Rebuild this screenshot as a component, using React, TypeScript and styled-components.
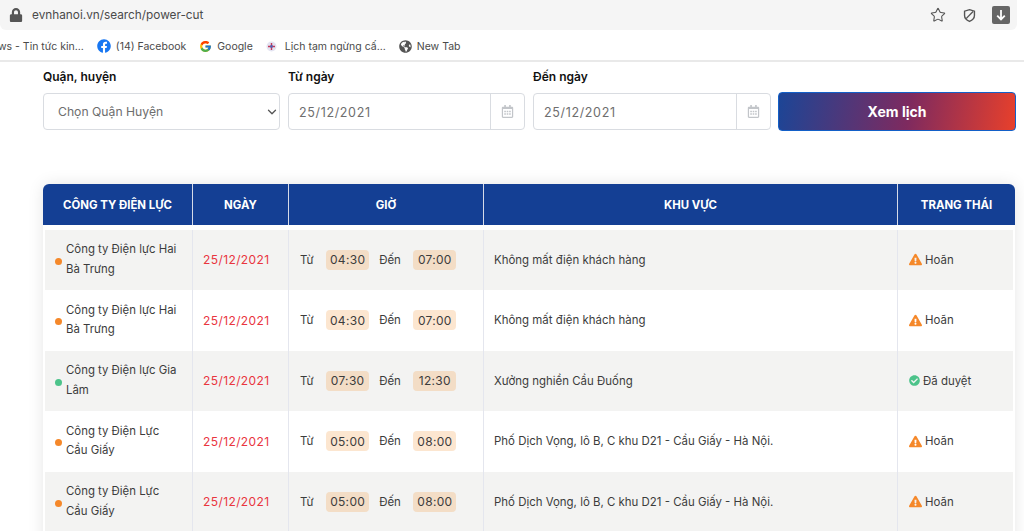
import React from "react";
import styled, { createGlobalStyle } from "styled-components";
import { ChevronDown, Star } from "lucide-react";
import { FaCheckCircle, FaExclamationTriangle, FaFacebook, FaGlobeAmericas, FaLock, FaRegCalendarAlt } from "react-icons/fa";
import { FcGoogle } from "react-icons/fc";

type Row = {
  company: string[];
  from: string;
  to: string;
  area: string;
  done?: boolean;
};

const rows: Row[] = [
  { company: ["Công ty Điện lực Hai", "Bà Trưng"], from: "04:30", to: "07:00", area: "Không mất điện khách hàng" },
  { company: ["Công ty Điện lực Hai", "Bà Trưng"], from: "04:30", to: "07:00", area: "Không mất điện khách hàng" },
  { company: ["Công ty Điện lực Gia", "Lâm"], from: "07:30", to: "12:30", area: "Xưởng nghiền Cầu Đuống", done: true },
  { company: ["Công ty Điện Lực", "Cầu Giấy"], from: "05:00", to: "08:00", area: "Phố Dịch Vọng, lô B, C khu D21 - Cầu Giấy - Hà Nội." },
  { company: ["Công ty Điện Lực", "Cầu Giấy"], from: "05:00", to: "08:00", area: "Phố Dịch Vọng, lô B, C khu D21 - Cầu Giấy - Hà Nội." },
];

export default function App() {
  return (
    <Page>
      <GlobalStyle />
      <UrlBar>
        <UrlLeft>
          <FaLock size={14} color="#555" />
          <UrlText>evnhanoi.vn/search/power-cut</UrlText>
        </UrlLeft>
        <UrlTools>
          <StarIcon size={16} color="#555" strokeWidth={1.6} />
          <svg width="13" height="15" viewBox="0 0 15 16" fill="none" stroke="#555" strokeWidth="1.6">
            <path d="M7.5 1.2 13.2 3v5c0 3.2-2.4 5.4-5.7 6.8C4.2 13.4 1.8 11.2 1.8 8V3z" />
            <path d="M3.6 11.6 11.6 3.4" />
          </svg>
          <DownloadBox>
            <svg width="12" height="12" viewBox="0 0 12 12" fill="none" stroke="#fff" strokeWidth="1.8">
              <path d="M6 1v9.4M2.2 6.6 6 10.4l3.8-3.8" />
            </svg>
          </DownloadBox>
        </UrlTools>
      </UrlBar>
      <Bookmarks>
        <Bookmark>ws - Tin tức kin...</Bookmark>
        <Bookmark>
          <FaFacebook size={14} color="#1877f2" />
          (14) Facebook
        </Bookmark>
        <Bookmark>
          <FcGoogle size={13} />
          Google
        </Bookmark>
        <Bookmark $gap={8}>
          <svg width="11" height="11" viewBox="0 0 11 11">
            <circle cx="5.5" cy="5.5" r="5" fill="#e4e4f2" />
            <path d="M5.5 2v7M2 5.5h7" stroke="#c0395a" strokeWidth="1.4" />
            <circle cx="5.5" cy="5.5" r="1.4" fill="#5560b0" />
          </svg>
          Lịch tạm ngừng cấ...
        </Bookmark>
        <Bookmark>
          <FaGlobeAmericas size={13} color="#555" />
          New Tab
        </Bookmark>
      </Bookmarks>

      <Filters>
        <Field>
          <Label>Quận, huyện</Label>
          <SelectBox>
            <Select defaultValue="">
              <option value="">Chọn Quận Huyện</option>
            </Select>
            <Chevron size={14} strokeWidth={2.2} />
          </SelectBox>
        </Field>
        <DateField label="Từ ngày" />
        <DateField label="Đến ngày" />
        <SubmitButton type="button">Xem lịch</SubmitButton>
      </Filters>

      <Table>
        <HeaderRow>
          <HeaderCell>CÔNG TY ĐIỆN LỰC</HeaderCell>
          <HeaderCell>NGÀY</HeaderCell>
          <HeaderCell>GIỜ</HeaderCell>
          <HeaderCell>KHU VỰC</HeaderCell>
          <HeaderCell>TRẠNG THÁI</HeaderCell>
        </HeaderRow>
        {rows.map((row, i) => (
          <BodyRow key={i} $striped={i % 2 === 0}>
            <CompanyCell>
              <Dot $done={row.done} />
              <span>
                {row.company[0]}
                <br />
                {row.company[1]}
              </span>
            </CompanyCell>
            <DateCell>25/12/2021</DateCell>
            <TimeCell>
              <span>Từ</span>
              <TimeTag>{row.from}</TimeTag>
              <span>Đến</span>
              <TimeTag>{row.to}</TimeTag>
            </TimeCell>
            <Cell>{row.area}</Cell>
            <StatusCell>
              {row.done ? (
                <FaCheckCircle size={11} color="#4cc38a" />
              ) : (
                <FaExclamationTriangle size={13} color="#f5882a" />
              )}
              {row.done ? "Đã duyệt" : "Hoãn"}
            </StatusCell>
          </BodyRow>
        ))}
      </Table>
    </Page>
  );
}

const DateField = ({ label }: { label: string }) => (
  <Field>
    <Label>{label}</Label>
    <DateBox>
      <DateValue>25/12/2021</DateValue>
      <CalendarAddon>
        <FaRegCalendarAlt size={13} color="#c2c5c9" />
      </CalendarAddon>
    </DateBox>
  </Field>
);

const GlobalStyle = createGlobalStyle`
  html, body {
    margin: 0;
    padding: 0;
    background: #fff;
    overflow: hidden;
  }
  * {
    box-sizing: border-box;
  }
`;

const Page = styled.div`
  width: 1024px;
  height: 531px;
  overflow: hidden;
  font-family: Inter, "Liberation Sans", sans-serif;
  color: #3a3a3a;
`;

const UrlBar = styled.div`
  width: 1017px;
  height: 30px;
  background: #f5f5f5;
  border-bottom-right-radius: 6px;
  border-bottom-left-radius: 6px;
  display: flex;
  align-items: center;
  justify-content: space-between;
  padding: 0 7px 0 9px;
`;

const UrlLeft = styled.div`
  display: flex;
  align-items: center;
  gap: 9px;
`;

const UrlText = styled.span`
  font-size: 11.8px;
  color: #4a4a4a;
`;

const UrlTools = styled.div`
  display: flex;
  align-items: center;
  gap: 16px;
`;

const StarIcon = styled(Star)`
  margin-right: 1px;
`;

const DownloadBox = styled.div`
  width: 18px;
  height: 18px;
  border-radius: 2px;
  background: #666;
  display: flex;
  align-items: center;
  justify-content: center;
`;

const Bookmarks = styled.div`
  height: 32px;
  display: flex;
  align-items: center;
  gap: 13px;
  padding-top: 2px;
  margin-left: -2px;
  border-bottom: 2px solid #e9e9e9;
`;

const Bookmark = styled.div<{ $gap?: number }>`
  display: flex;
  align-items: center;
  gap: ${(p) => p.$gap ?? 5}px;
  font-size: 10.5px;
  color: #4a4a4a;
  white-space: nowrap;
`;

const Filters = styled.div`
  display: grid;
  grid-template-columns: 237px 237px 238px 238px;
  column-gap: 8px;
  align-items: end;
  padding: 7px 0 0 43px;
`;

const Field = styled.div`
  display: flex;
  flex-direction: column;
  gap: 8px;
`;

const Label = styled.label`
  font-size: 12px;
  font-weight: 600;
  color: #111;
  line-height: 16px;
`;

const SelectBox = styled.div`
  position: relative;
  height: 37px;
`;

const Select = styled.select`
  width: 100%;
  height: 100%;
  appearance: none;
  border: 1px solid #d9dce1;
  border-radius: 4px;
  background: #fff;
  padding: 0 14px;
  font-family: inherit;
  font-size: 12.2px;
  color: #6e6e6e;
`;

const Chevron = styled(ChevronDown)`
  position: absolute;
  right: 1px;
  top: 12px;
  color: #555;
`;

const DateBox = styled.div`
  height: 37px;
  display: flex;
  border: 1px solid #d9dce1;
  border-radius: 4px;
`;

const DateValue = styled.div`
  flex: 1;
  display: flex;
  align-items: center;
  padding: 1px 0 0 10px;
  font-size: 12.5px;
  letter-spacing: 0.65px;
  color: #6e6e6e;
`;

const CalendarAddon = styled.div`
  width: 34px;
  display: flex;
  align-items: center;
  justify-content: center;
  border-left: 1px solid #d9dce1;
`;

const SubmitButton = styled.button`
  width: 238px;
  height: 39px;
  margin: 0 0 -1px -1px;
  border: 1px solid #1360c8;
  border-radius: 4px;
  background: linear-gradient(100deg, #1c4596 0%, #7e2a5f 55%, #e8402b 100%);
  color: #fff;
  font-family: inherit;
  font-size: 14px;
  font-weight: 700;
`;

const Table = styled.div`
  width: 972px;
  margin: 54px 0 0 43px;
  border-radius: 6px 6px 0 0;
  box-shadow: 0 0 16px rgba(0, 0, 0, 0.1);
  background: #fff;
  padding-bottom: 20px;
`;

const HeaderRow = styled.div`
  display: grid;
  grid-template-columns: 149px 96px 195px 414px 118px;
  height: 41px;
  background: #143f94;
  border-radius: 6px 6px 0 0;
  margin-bottom: 4.5px;
`;

const HeaderCell = styled.div`
  display: flex;
  align-items: center;
  justify-content: center;
  font-size: 11.4px;
  font-weight: 700;
  color: #fff;
  white-space: nowrap;
  & + & {
    border-left: 1px solid #d6dbe8;
  }
`;

const BodyRow = styled.div<{ $striped: boolean }>`
  display: grid;
  grid-template-columns: 147px 96px 195px 414px 116px;
  height: 60.5px;
  margin: 0 2px;
  background: ${(p) => (p.$striped ? "#f3f3f2" : "#fff")};
`;

const Cell = styled.div`
  display: flex;
  align-items: center;
  padding-left: 10px;
  font-size: 11.45px;
  color: #3c3c3c;
  border-left: 1px solid #e4e6ee;
  white-space: nowrap;
`;

const CompanyCell = styled.div`
  display: flex;
  align-items: center;
  gap: 4px;
  padding-left: 10px;
  font-size: 11.4px;
  line-height: 19.5px;
  color: #3c3c3c;
  white-space: nowrap;
`;

const Dot = styled.i<{ $done?: boolean }>`
  width: 7px;
  height: 7px;
  border-radius: 50%;
  flex: none;
  margin-top: 3px;
  background: ${(p) => (p.$done ? "#4cc38a" : "#f5882a")};
`;

const DateCell = styled(Cell)`
  color: #e9353f;
  font-size: 12px;
  letter-spacing: 0.4px;
`;

const TimeCell = styled(Cell)`
  padding-left: 11px;
  gap: 10px;
`;

const TimeTag = styled.span`
  height: 20px;
  width: 43px;
  margin-left: 2.5px;
  display: flex;
  align-items: center;
  justify-content: center;
  border-radius: 4px;
  background: rgba(244, 164, 82, 0.27);
  font-size: 12px;
  letter-spacing: 0.3px;
  color: #3c3c3c;
`;

const StatusCell = styled(Cell)`
  gap: 3px;
  padding-left: 11px;
`;
